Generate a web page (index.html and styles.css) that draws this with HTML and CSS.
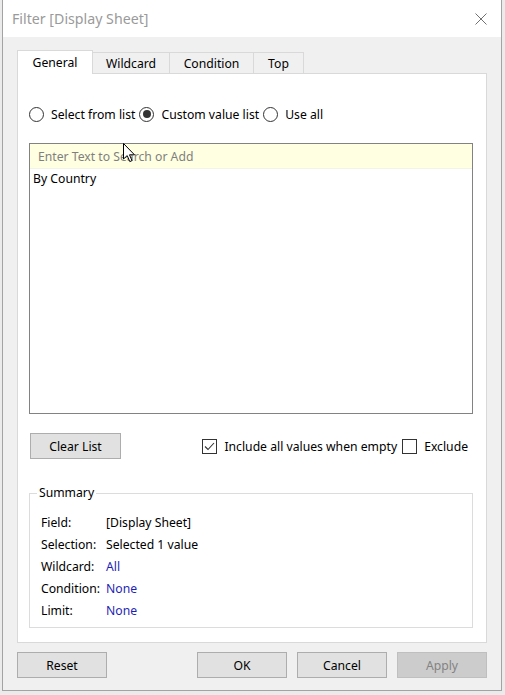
FILE: index.html
```html
<!DOCTYPE html>
<html>
<head>
<meta charset="utf-8">
<link rel="stylesheet" href="styles.css">
</head>
<body>
<div class="window">
  <div class="titlebar">
    <span class="title">Filter [Display Sheet]</span>
    <svg class="close" width="12" height="12" viewBox="0 0 12 12"><path d="M0.5 0.5 L11.5 11.5 M11.5 0.5 L0.5 11.5" stroke="#707070" stroke-width="1" fill="none"/></svg>
  </div>
  <div class="content">
    <div class="tabs">
      <div class="tab tab-active tab-general">General</div>
      <div class="tab tab-wildcard">Wildcard</div>
      <div class="tab tab-condition">Condition</div>
      <div class="tab tab-top">Top</div>
    </div>
    <div class="panel">
      <div class="radio-row">
        <span class="radio"></span><span class="radio-label">Select from list</span>
        <span class="radio radio-on"></span><span class="radio-label">Custom value list</span>
        <span class="radio"></span><span class="radio-label">Use all</span>
      </div>
      <div class="listbox">
        <div class="search">Enter Text to Search or Add</div>
        <div class="item">By Country</div>
      </div>
      <div class="clear-row">
        <div class="btn btn-clear">Clear List</div>
        <div class="checks">
          <span class="check"><svg width="15" height="15" viewBox="0 0 15 15"><path d="M3 7.5 L6 10.5 L12 4" stroke="#333" stroke-width="1.1" fill="none"/></svg></span>
          <span class="check-label">Include all values when empty</span>
          <span class="check"></span>
          <span class="check-label">Exclude</span>
        </div>
      </div>
      <fieldset class="summary">
        <legend>Summary</legend>
        <div class="srow"><span class="skey">Field:</span><span>[Display Sheet]</span></div>
        <div class="srow"><span class="skey">Selection:</span><span>Selected 1 value</span></div>
        <div class="srow"><span class="skey">Wildcard:</span><span class="sval">All</span></div>
        <div class="srow"><span class="skey">Condition:</span><span class="sval">None</span></div>
        <div class="srow"><span class="skey">Limit:</span><span class="sval">None</span></div>
      </fieldset>
    </div>
    <div class="footer">
      <div class="btn">Reset</div>
      <div class="footer-right">
        <div class="btn">OK</div>
        <div class="btn">Cancel</div>
        <div class="btn btn-disabled">Apply</div>
      </div>
    </div>
  </div>
</div>
<svg class="cursor" width="13" height="20" viewBox="0 0 13 20"><path d="M0.5 0.5 L0.5 16 L4.2 12.6 L6.8 18.6 L9 17.6 L6.5 11.8 L11.5 11.8 Z" fill="#fff" stroke="#000" stroke-width="1"/></svg>
</body>
</html>
```

FILE: styles.css
```css
html, body {
  margin: 0;
  padding: 0;
}
body {
  background: #ebebeb;
  font-family: "Noto Sans", "Open Sans", sans-serif;
  font-size: 12.2px;
  color: #000;
  position: relative;
  width: 505px;
  height: 695px;
  overflow: hidden;
}
.window {
  margin-left: 2px;
  width: 500px;
  height: 691px;
  box-sizing: border-box;
  border: 1px solid #a3a3a3;
  border-top: none;
  background: #f0f0f0;
  display: flex;
  flex-direction: column;
}
.titlebar {
  height: 37px;
  background: #fff;
  display: flex;
  align-items: center;
  justify-content: space-between;
  padding: 0 14px 0 9px;
  flex-shrink: 0;
}
.title {
  font-size: 14.2px;
  color: #9a9a9a;
  line-height: 20px;
  margin-top: 1px;
}
.close {
  display: block;
}
.content {
  padding: 13px 14px 0 14px;
  display: flex;
  flex-direction: column;
}
.tabs {
  display: flex;
  align-items: flex-end;
  height: 23px;
  position: relative;
  z-index: 1;
}
.tab {
  box-sizing: border-box;
  height: 21px;
  border: 1px solid #d9d9d9;
  border-bottom: none;
  background: #f0f0f0;
  text-align: center;
  line-height: 21px;
  margin-left: -1px;
}
.tab-active {
  height: 24px;
  margin-bottom: -1px;
  background: #fff;
  line-height: 23px;
  margin-left: 0;
}
.tab-general { width: 76px; }
.tab-wildcard { width: 78px; }
.tab-condition { width: 85px; }
.tab-top { width: 51px; }
.panel {
  background: #fff;
  border: 1px solid #d9d9d9;
  height: 570px;
  box-sizing: border-box;
  padding: 0 13px 0 11px;
  display: flex;
  flex-direction: column;
}
.radio-row {
  display: flex;
  align-items: center;
  height: 16px;
  margin-top: 32px;
}
.radio {
  box-sizing: border-box;
  width: 15px;
  height: 15px;
  border: 1px solid #333;
  border-radius: 50%;
  background: #fff;
  margin-right: 7px;
  display: flex;
  align-items: center;
  justify-content: center;
  flex-shrink: 0;
}
.radio-on::after {
  content: "";
  width: 8px;
  height: 8px;
  border-radius: 50%;
  background: #333;
}
.radio-label {
  margin-right: 4px;
  white-space: nowrap;
  line-height: 16px;
  padding-top: 1px;
}
.listbox {
  margin-top: 21px;
  height: 271px;
  box-sizing: border-box;
  border: 1px solid #828282;
  display: flex;
  flex-direction: column;
}
.search {
  height: 25px;
  box-sizing: border-box;
  background: #ffffe1;
  border-bottom: 1px solid #f3f3e6;
  color: #7f7f7f;
  padding-left: 8px;
  line-height: 25px;
}
.item {
  height: 19px;
  line-height: 18px;
  padding-top: 1px;
  padding-left: 3px;
  box-sizing: border-box;
}
.clear-row {
  margin-top: 19px;
  display: flex;
  align-items: center;
  height: 26px;
}
.btn {
  box-sizing: border-box;
  width: 90px;
  height: 26px;
  background: #e1e1e1;
  border: 1px solid #adadad;
  text-align: center;
  line-height: 23px;
  padding-top: 1px;
}
.btn-clear {
  width: 91px;
  margin-left: 1px;
}
.btn-disabled {
  background: #cccccc;
  border-color: #bfbfbf;
  color: #838383;
}
.checks {
  margin-left: auto;
  margin-right: 5px;
  display: flex;
  align-items: center;
}
.check {
  box-sizing: border-box;
  width: 15px;
  height: 15px;
  border: 1px solid #333;
  background: #fff;
  margin-right: 7px;
  position: relative;
  flex-shrink: 0;
}
.check svg {
  position: absolute;
  left: -1px;
  top: -1px;
}
.check-label {
  margin-right: 5px;
  white-space: nowrap;
  padding-top: 1px;
}
.check-label:last-child {
  margin-right: 0;
}
.summary {
  margin: 26px 0 0 0;
  padding: 0 0 5px 11px;
  border: 1px solid #dcdcdc;
  height: 143px;
  box-sizing: border-box;
  min-width: 0;
}
.summary legend {
  padding: 0 2px;
  margin-left: -4px;
  line-height: 16px;
}
.srow {
  display: flex;
  height: 22px;
  line-height: 22px;
}
.summary legend + .srow {
  margin-top: 11px;
}
.skey {
  width: 65px;
  flex-shrink: 0;
}
.sval {
  color: #1f1fb5;
}
.footer {
  margin-top: 9px;
  display: flex;
}
.footer-right {
  margin-left: auto;
  display: flex;
  gap: 10px;
}
.cursor {
  position: absolute;
  left: 123px;
  top: 143px;
}
```
